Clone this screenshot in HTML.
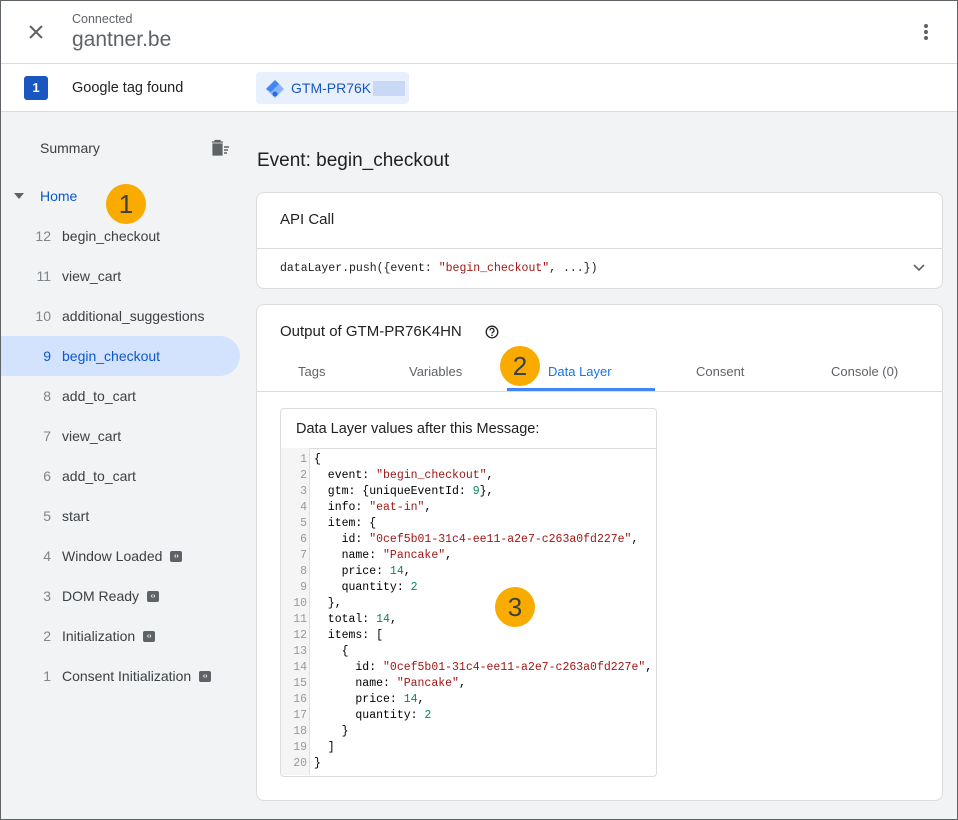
<!DOCTYPE html>
<html><head><meta charset="utf-8"><style>
*{box-sizing:border-box;margin:0;padding:0}
body{width:958px;height:820px;overflow:hidden;font-family:"Liberation Sans",Arial,sans-serif;background:#fff;position:relative}
.frame{position:absolute;inset:0;border:1px solid #5f6368;pointer-events:none;z-index:10}
.abs{position:absolute}
.hdr{left:0;top:0;width:958px;height:64px;border-bottom:1px solid #dadce0;background:#fff}
.tagrow{left:0;top:64px;width:958px;height:48px;border-bottom:1px solid #dadce0;background:#fff}
.body{left:0;top:112px;width:958px;height:708px;background:#f1f3f4}
.side{font-size:14px;color:#3c4043}
.item{position:absolute;left:0;width:240px;height:40px;line-height:40px}
.item .n{position:absolute;left:0;width:51px;text-align:right;color:#80868b}
.item .t{position:absolute;left:62px}
.sel{background:#d3e3fd;border-radius:0 20px 20px 0}
.sel .n,.sel .t{color:#0b57d0}
.badge{display:inline-block;width:12px;height:11px;background:#5f6368;border-radius:2px;vertical-align:middle;margin-left:8px;position:relative;top:-1px;color:#fff;font-size:7px;line-height:11px;text-align:center;font-weight:bold}
.card{background:#fff;border:1px solid #dadce0;border-radius:8px}
.mono{font-family:"Liberation Mono",monospace;font-size:11.5px}
.s{color:#a31515}.num{color:#098658}
.circ{position:absolute;width:40px;height:40px;border-radius:50%;background:#f9ab00;color:#3c4043;font-size:26px;text-align:center;line-height:40px;z-index:5}
.tab{position:absolute;top:364px;font-size:13px;color:#5f6368}
.code{position:absolute;left:281px;top:448px;width:374px;height:327px}
.gut{position:absolute;left:0;top:0;width:29px;height:100%;background:#f5f5f5;border-right:1px solid #e0e0e0}
.ln{position:absolute;left:0;width:26px;text-align:right;color:#999;line-height:16px}
.cl{position:absolute;left:33px;white-space:pre;line-height:16px;color:#000}
</style></head><body>
<div class="abs hdr">
 <svg class="abs" style="left:27px;top:23px" width="18" height="18" viewBox="0 0 18 18"><path d="M3 3L15 15M15 3L3 15" stroke="#5f6368" stroke-width="2"/></svg>
 <div class="abs" style="left:72px;top:12px;font-size:12.5px;color:#5f6368">Connected</div>
 <div class="abs" style="left:72px;top:28px;font-size:21px;color:#5f6368">gantner.be</div>
 <svg class="abs" style="left:922px;top:22px" width="8" height="20"><circle cx="4" cy="4" r="2" fill="#5f6368"/><circle cx="4" cy="10" r="2" fill="#5f6368"/><circle cx="4" cy="16" r="2" fill="#5f6368"/></svg>
</div>
<div class="abs tagrow">
 <div class="abs" style="left:24px;top:12px;width:24px;height:24px;background:#1a56c0;border-radius:3px;color:#fff;font-size:13px;font-weight:bold;text-align:center;line-height:24px">1</div>
 <div class="abs" style="left:72px;top:16px;font-size:14.5px;color:#202124">Google tag found</div>
 <div class="abs" style="left:256px;top:8px;width:153px;height:32px;background:#e8f0fe;border-radius:4px">
  <svg class="abs" style="left:9px;top:7px" width="20" height="20" viewBox="0 0 20 20"><path d="M10 1L19 10L10 19L1 10Z" fill="#8ab4f8"/><path d="M10 1L14 5L6 13L1 10Z" fill="#4285f4"/><circle cx="10" cy="15" r="2.5" fill="#246fdb"/></svg>
  <div class="abs" style="left:35px;top:8px;font-size:14px;color:#1a56c0">GTM-PR76K</div>
  <div class="abs" style="left:117px;top:9px;width:32px;height:15px;background:#c9d8f5"></div>
 </div>
</div>
<div class="abs body"></div>
<div class="side">
 <div class="abs" style="left:40px;top:140px;font-size:14px;color:#3c4043">Summary</div>
 <svg class="abs" style="left:209px;top:139px" width="22" height="18" viewBox="0 0 22 18"><path d="M3 3h11M6 3V1.5h5V3M4 5h9v11H4z" fill="#5f6368" stroke="#5f6368" stroke-width="1.2"/><path d="M15 8h5M15 11h4M15 14h3" stroke="#5f6368" stroke-width="1.6"/></svg>
 <svg class="abs" style="left:14px;top:193px" width="10" height="6"><path d="M0 0h10L5 6z" fill="#5f6368"/></svg>
 <div class="abs" style="left:40px;top:188px;font-size:14px;color:#0b57d0">Home</div>
 <div class="item" style="top:216px"><span class="n">12</span><span class="t">begin_checkout</span></div>
 <div class="item" style="top:256px"><span class="n">11</span><span class="t">view_cart</span></div>
 <div class="item" style="top:296px"><span class="n">10</span><span class="t">additional_suggestions</span></div>
 <div class="item sel" style="top:336px"><span class="n">9</span><span class="t">begin_checkout</span></div>
 <div class="item" style="top:376px"><span class="n">8</span><span class="t">add_to_cart</span></div>
 <div class="item" style="top:416px"><span class="n">7</span><span class="t">view_cart</span></div>
 <div class="item" style="top:456px"><span class="n">6</span><span class="t">add_to_cart</span></div>
 <div class="item" style="top:496px"><span class="n">5</span><span class="t">start</span></div>
 <div class="item" style="top:536px"><span class="n">4</span><span class="t">Window Loaded<span class="badge">‹›</span></span></div>
 <div class="item" style="top:576px"><span class="n">3</span><span class="t">DOM Ready<span class="badge">‹›</span></span></div>
 <div class="item" style="top:616px"><span class="n">2</span><span class="t">Initialization<span class="badge">‹›</span></span></div>
 <div class="item" style="top:656px"><span class="n">1</span><span class="t">Consent Initialization<span class="badge">‹›</span></span></div>
</div>
<div class="abs" style="left:257px;top:150px;font-size:19px;color:#202124">Event: begin_checkout</div>
<div class="abs card" style="left:256px;top:192px;width:687px;height:97px">
 <div class="abs" style="left:23px;top:18px;font-size:15px;color:#202124">API Call</div>
 <div class="abs" style="left:0;top:55px;width:685px;border-top:1px solid #dadce0"></div>
 <div class="abs mono" style="left:23px;top:69px;color:#202124">dataLayer.push({event: <span class="s">"begin_checkout"</span>, ...})</div>
 <svg class="abs" style="left:656px;top:71px" width="12" height="8"><path d="M1 1L6 6L11 1" stroke="#5f6368" stroke-width="1.6" fill="none"/></svg>
</div>
<div class="abs card" style="left:256px;top:304px;width:687px;height:497px">
 <div class="abs" style="left:23px;top:18px;font-size:15px;color:#202124">Output of GTM-PR76K4HN</div>
 <svg class="abs" style="left:228px;top:20px" width="14" height="14" viewBox="0 0 14 14"><circle cx="7" cy="7" r="5.8" stroke="#202124" stroke-width="1.3" fill="none"/><path d="M5 5.5a2 2 0 1 1 2.6 1.8c-.5.2-.6.5-.6 1.2" stroke="#202124" stroke-width="1.2" fill="none"/><circle cx="7" cy="10.3" r=".8" fill="#202124"/></svg>
 <div class="abs" style="left:0;top:86px;width:685px;border-top:1px solid #dadce0"></div>
 <div class="abs" style="left:250px;top:83px;width:148px;height:3px;background:#4285f4"></div>
</div>
<div class="tab" style="left:298px">Tags</div>
<div class="tab" style="left:409px">Variables</div>
<div class="tab" style="left:548px;color:#1a73e8">Data Layer</div>
<div class="tab" style="left:696px">Consent</div>
<div class="tab" style="left:831px">Console (0)</div>
<div class="abs card" style="left:280px;top:408px;width:377px;height:369px;border-radius:4px">
 <div class="abs" style="left:15px;top:12px;font-size:14.5px;color:#202124">Data Layer values after this Message:</div>
 <div class="abs" style="left:0;top:39px;width:375px;border-top:1px solid #dadce0"></div>
</div>
<div class="code mono">
 <div class="gut"></div>
 <div class="ln" style="top:4px">1<br>2<br>3<br>4<br>5<br>6<br>7<br>8<br>9<br>10<br>11<br>12<br>13<br>14<br>15<br>16<br>17<br>18<br>19<br>20</div>
 <div class="cl" style="top:4px">{
  event: <span class="s">"begin_checkout"</span>,
  gtm: {uniqueEventId: <span class="num">9</span>},
  info: <span class="s">"eat-in"</span>,
  item: {
    id: <span class="s">"0cef5b01-31c4-ee11-a2e7-c263a0fd227e"</span>,
    name: <span class="s">"Pancake"</span>,
    price: <span class="num">14</span>,
    quantity: <span class="num">2</span>
  },
  total: <span class="num">14</span>,
  items: [
    {
      id: <span class="s">"0cef5b01-31c4-ee11-a2e7-c263a0fd227e"</span>,
      name: <span class="s">"Pancake"</span>,
      price: <span class="num">14</span>,
      quantity: <span class="num">2</span>
    }
  ]
}</div>
</div>
<div class="circ" style="left:106px;top:184px">1</div>
<div class="circ" style="left:500px;top:346px">2</div>
<div class="circ" style="left:495px;top:587px">3</div>
<div class="frame"></div>
</body></html>
